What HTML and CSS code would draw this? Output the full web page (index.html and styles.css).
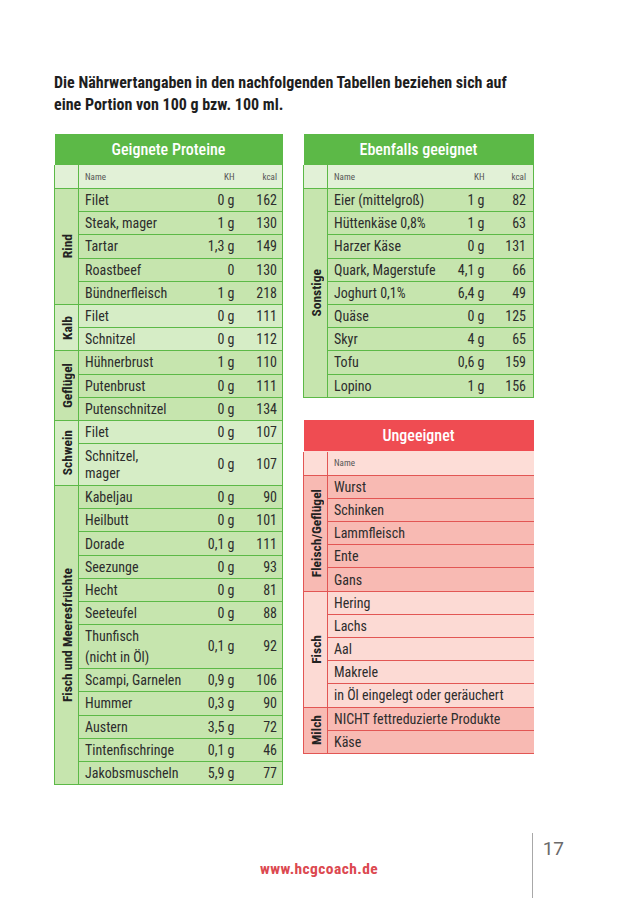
FILE: index.html
```html
<!DOCTYPE html>
<html lang="de">
<head>
<meta charset="utf-8">
<link rel="stylesheet" href="styles.css">
</head>
<body>
<div class="page">
  <p class="intro">Die Nährwertangaben in den nachfolgenden Tabellen beziehen sich auf<br>eine Portion von 100 g bzw. 100 ml.</p>
  <div class="tables">
    <table class="tbl green left">
      <colgroup><col class="c-cat"><col class="c-name"><col class="c-kh"><col class="c-kc"></colgroup>
      <tr><th colspan="4" class="title">Geignete Proteine</th></tr>
      <tr class="sub"><td class="cat"></td><td class="name">Name</td><td class="kh">KH</td><td class="kc">kcal</td></tr>
      <tr class="dark"><td class="cat" rowspan="5"><span>Rind</span></td><td class="name">Filet</td><td class="kh">0 g</td><td class="kc">162</td></tr>
      <tr class="dark"><td class="name">Steak, mager</td><td class="kh">1 g</td><td class="kc">130</td></tr>
      <tr class="dark"><td class="name">Tartar</td><td class="kh">1,3 g</td><td class="kc">149</td></tr>
      <tr class="dark"><td class="name">Roastbeef</td><td class="kh">0</td><td class="kc">130</td></tr>
      <tr class="dark"><td class="name">Bündnerfleisch</td><td class="kh">1 g</td><td class="kc">218</td></tr>
      <tr class="light"><td class="cat" rowspan="2"><span>Kalb</span></td><td class="name">Filet</td><td class="kh">0 g</td><td class="kc">111</td></tr>
      <tr class="light"><td class="name">Schnitzel</td><td class="kh">0 g</td><td class="kc">112</td></tr>
      <tr class="dark"><td class="cat" rowspan="3"><span>Geflügel</span></td><td class="name">Hühnerbrust</td><td class="kh">1 g</td><td class="kc">110</td></tr>
      <tr class="dark"><td class="name">Putenbrust</td><td class="kh">0 g</td><td class="kc">111</td></tr>
      <tr class="dark"><td class="name">Putenschnitzel</td><td class="kh">0 g</td><td class="kc">134</td></tr>
      <tr class="light"><td class="cat" rowspan="2"><span>Schwein</span></td><td class="name">Filet</td><td class="kh">0 g</td><td class="kc">107</td></tr>
      <tr class="light two"><td class="name">Schnitzel,<br>mager</td><td class="kh">0 g</td><td class="kc">107</td></tr>
      <tr class="dark"><td class="cat" rowspan="12"><span>Fisch und Meeresfrüchte</span></td><td class="name">Kabeljau</td><td class="kh">0 g</td><td class="kc">90</td></tr>
      <tr class="dark"><td class="name">Heilbutt</td><td class="kh">0 g</td><td class="kc">101</td></tr>
      <tr class="dark"><td class="name">Dorade</td><td class="kh">0,1 g</td><td class="kc">111</td></tr>
      <tr class="dark"><td class="name">Seezunge</td><td class="kh">0 g</td><td class="kc">93</td></tr>
      <tr class="dark"><td class="name">Hecht</td><td class="kh">0 g</td><td class="kc">81</td></tr>
      <tr class="dark"><td class="name">Seeteufel</td><td class="kh">0 g</td><td class="kc">88</td></tr>
      <tr class="dark two wide"><td class="name">Thunfisch<br>(nicht in Öl)</td><td class="kh">0,1 g</td><td class="kc">92</td></tr>
      <tr class="dark"><td class="name">Scampi, Garnelen</td><td class="kh">0,9 g</td><td class="kc">106</td></tr>
      <tr class="dark"><td class="name">Hummer</td><td class="kh">0,3 g</td><td class="kc">90</td></tr>
      <tr class="dark"><td class="name">Austern</td><td class="kh">3,5 g</td><td class="kc">72</td></tr>
      <tr class="dark"><td class="name">Tintenfischringe</td><td class="kh">0,1 g</td><td class="kc">46</td></tr>
      <tr class="dark"><td class="name">Jakobsmuscheln</td><td class="kh">5,9 g</td><td class="kc">77</td></tr>
    </table>
    <div class="right">
      <table class="tbl green">
        <colgroup><col class="c-cat"><col class="c-name"><col class="c-kh"><col class="c-kc"></colgroup>
        <tr><th colspan="4" class="title">Ebenfalls geeignet</th></tr>
        <tr class="sub"><td class="cat"></td><td class="name">Name</td><td class="kh">KH</td><td class="kc">kcal</td></tr>
        <tr class="dark"><td class="cat" rowspan="9"><span>Sonstige</span></td><td class="name">Eier (mittelgroß)</td><td class="kh">1 g</td><td class="kc">82</td></tr>
        <tr class="dark"><td class="name">Hüttenkäse 0,8%</td><td class="kh">1 g</td><td class="kc">63</td></tr>
        <tr class="dark"><td class="name">Harzer Käse</td><td class="kh">0 g</td><td class="kc">131</td></tr>
        <tr class="dark"><td class="name">Quark, Magerstufe</td><td class="kh">4,1 g</td><td class="kc">66</td></tr>
        <tr class="dark"><td class="name">Joghurt 0,1%</td><td class="kh">6,4 g</td><td class="kc">49</td></tr>
        <tr class="dark"><td class="name">Quäse</td><td class="kh">0 g</td><td class="kc">125</td></tr>
        <tr class="dark"><td class="name">Skyr</td><td class="kh">4 g</td><td class="kc">65</td></tr>
        <tr class="dark"><td class="name">Tofu</td><td class="kh">0,6 g</td><td class="kc">159</td></tr>
        <tr class="dark"><td class="name">Lopino</td><td class="kh">1 g</td><td class="kc">156</td></tr>
      </table>
      <table class="tbl red">
        <colgroup><col class="c-cat"><col class="c-name"></colgroup>
        <tr><th colspan="2" class="title">Ungeeignet</th></tr>
        <tr class="sub"><td class="cat"></td><td class="name">Name</td></tr>
        <tr class="dark"><td class="cat" rowspan="5"><span>Fleisch/Geflügel</span></td><td class="name">Wurst</td></tr>
        <tr class="dark"><td class="name">Schinken</td></tr>
        <tr class="dark"><td class="name">Lammfleisch</td></tr>
        <tr class="dark"><td class="name">Ente</td></tr>
        <tr class="dark"><td class="name">Gans</td></tr>
        <tr class="light"><td class="cat" rowspan="5"><span>Fisch</span></td><td class="name">Hering</td></tr>
        <tr class="light"><td class="name">Lachs</td></tr>
        <tr class="light"><td class="name">Aal</td></tr>
        <tr class="light"><td class="name">Makrele</td></tr>
        <tr class="light"><td class="name">in Öl eingelegt oder geräuchert</td></tr>
        <tr class="dark"><td class="cat" rowspan="2"><span>Milch</span></td><td class="name">NICHT fettreduzierte Produkte</td></tr>
        <tr class="dark"><td class="name">Käse</td></tr>
      </table>
    </div>
  </div>
  <footer class="footer">
    <div></div>
    <a class="url">www.hcgcoach.de</a>
    <div class="pagenum"><span class="rule"></span><span class="num">17</span></div>
  </footer>
</div>
</body>
</html>
```

FILE: styles.css
```css
* { box-sizing: border-box; }
html, body { margin: 0; padding: 0; background: #fff; }
body {
  font-family: "Roboto Condensed", "Liberation Sans Narrow", "DejaVu Sans Condensed", "Roboto", sans-serif;
  color: #2b2b2b;
}
.page {
  width: 638px;
  height: 900px;
  padding: 72px 0 0 54px;
  position: relative;
  overflow: hidden;
}
.intro {
  margin: 0;
  font-size: 16px;
  line-height: 22px;
  font-weight: 700;
  color: #1e1e1e;
}
.tables {
  display: flex;
  gap: 20px;
  margin-top: 17px;
  align-items: flex-start;
}
.right {
  display: flex;
  flex-direction: column;
  gap: 22px;
}
.tbl {
  border-collapse: collapse;
  table-layout: fixed;
  font-size: 14px;
  color: #2d2d2d;
}
.tbl.left { width: 229px; }
.right .tbl { width: 231px; }
.c-cat { width: 24px; }
.left .c-kh { width: 55px; }
.left .c-kc { width: 43px; }
.right .c-kh { width: 50px; }
.right .c-kc { width: 44px; }

.tbl td, .tbl th {
  padding: 0;
  height: 23.2px;
  border: 1px solid;
  white-space: nowrap;
}
.tbl td.kh, .tbl td.kc { border-left: none; }
.tbl td.name { border-right: none; }
.tbl td.kh { border-right: none; }
.tbl .title {
  height: 31px;
  color: #fff;
  font-weight: 500;
  font-size: 16px;
  text-align: center;
}
.tbl .sub td {
  height: 24px;
  font-size: 9px;
  color: #555;
}
.tbl .cat span {
  display: block;
  writing-mode: vertical-rl;
  transform: rotate(180deg);
  font-weight: 700;
  font-size: 13.5px;
  color: #222;
  margin: 0 auto;
}
.tbl .name { padding-left: 6px; text-align: left; }
.tbl .kh { text-align: right; padding-right: 5px; }
.left .kc { text-align: right; padding-right: 5px; }
.right .kc { text-align: right; padding-right: 7px; }
.tbl tr.two td { height: 42px; line-height: 17px; }
.tbl tr.two.wide td { height: 44px; line-height: 21px; }

.green td, .green th { border-color: #5cb947; }
.green .title { background: #5cb947; }
.green .sub td { background: #e2f1d7; }
.green .dark td { background: #c6e5ae; }
.green .light td { background: #d6edc6; }

.red td, .red th { border-color: #e25654; }
.red .title { background: #ef4c52; }
.red .sub td { background: #fdddd7; }
.red .dark td { background: #f8bab3; }
.red .light td { background: #fcdad4; }

.tbl tr:first-child th { border-color: transparent; }

.footer {
  position: absolute;
  left: 0;
  right: 0;
  top: 833px;
  display: grid;
  grid-template-columns: 1fr auto 1fr;
  align-items: start;
}
.url {
  margin-top: 27px;
  color: #dc4950;
  font-weight: 700;
  font-size: 15.5px;
  letter-spacing: 0.4px;
  text-decoration: none;
}
.pagenum {
  display: flex;
  justify-self: end;
  margin-right: 74px;
}
.rule { width: 1px; height: 65px; background: #a8a8a8; }
.num { margin-left: 10px; margin-top: 4px; font-size: 19px; color: #6a6a6a; font-family: "Roboto", sans-serif; }
```
